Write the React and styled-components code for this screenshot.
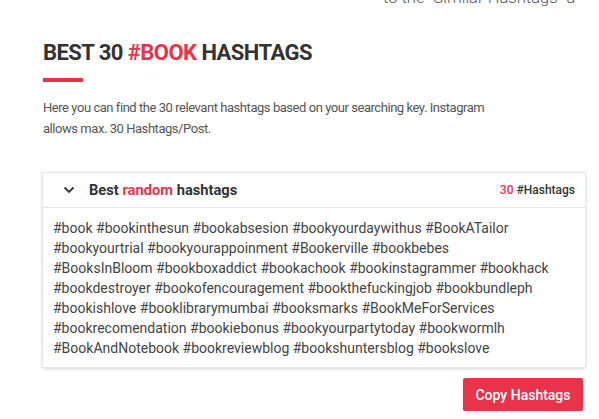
import React from 'react'
import styled, { createGlobalStyle } from 'styled-components'

const tags = [
    '#book #bookinthesun #bookabsesion #bookyourdaywithus #BookATailor',
    '#bookyourtrial #bookyourappoinment #Bookerville #bookbebes',
    '#BooksInBloom #bookboxaddict #bookachook #bookinstagrammer #bookhack',
    '#bookdestroyer #bookofencouragement #bookthefuckingjob #bookbundleph',
    '#bookishlove #booklibrarymumbai #booksmarks #BookMeForServices',
    '#bookrecomendation #bookiebonus #bookyourpartytoday #bookwormlh',
    '#BookAndNotebook #bookreviewblog #bookshuntersblog #bookslove',
]

const Global = createGlobalStyle`
body{
    margin: 0;
    background: #fff;
    font-family: Roboto, "Liberation Sans", sans-serif;
    overflow: hidden;
}
`

const App = () => {
    return (
        <Page>
            <Global />
            <TopLine>to the "Similar Hashtags" a</TopLine>
            <Title>BEST 30 <Red>#BOOK</Red> HASHTAGS</Title>
            <Bar />
            <Intro>
                Here you can find the 30 relevant hashtags based on your searching key. Instagram allows max. 30 Hashtags/Post.
            </Intro>
            <Card>
                <Head>
                    <Chevron viewBox="0 0 12 8" width="12" height="8">
                        <path d="M1.5 1.5 L6 6 L10.5 1.5" fill="none" stroke="#333" strokeWidth="1.8" />
                    </Chevron>
                    <HeadTitle>Best <Red>random</Red> hashtags</HeadTitle>
                    <Count><Red>30</Red> #Hashtags</Count>
                </Head>
                <Body>
                    {tags.map((line) => (
                        <div key={line}>{line}</div>
                    ))}
                </Body>
            </Card>
            <Actions>
                <CopyButton>Copy Hashtags</CopyButton>
            </Actions>
        </Page>
    )
}

const Page = styled.div`
padding: 0 15px 0 42px;
color: #333;
`
const TopLine = styled.div`
margin-top: -11px;
padding-left: 341px;
font-size: 16.6px;
line-height: 18px;
font-weight: 300;
color: #555;
white-space: nowrap;
overflow: hidden;
`
const Title = styled.h1`
margin: 32px 0 0 1px;
font-size: 22px;
line-height: 28px;
font-weight: 700;
color: #333;
letter-spacing: -0.55px;
`
const Red = styled.span`
color: #e8334a;
`
const Bar = styled.div`
width: 40px;
height: 4px;
margin: 11px 0 0 1px;
background: #e8334a;
`
const Intro = styled.p`
margin: 15px 0 0 1px;
max-width: 470px;
font-size: 13px;
line-height: 21px;
letter-spacing: -0.45px;
color: #555;
`
const Card = styled.div`
margin-top: 33px;
width: 542px;
border: 1px solid #e6e6e6;
box-shadow: 0 1px 3px rgba(0, 0, 0, 0.15);
background: #fff;
`
const Head = styled.div`
height: 34px;
display: flex;
align-items: center;
padding: 0 10px 0 20px;
border-bottom: 1px solid #e6e6e6;
`
const Chevron = styled.svg`
margin-right: 14px;
`
const HeadTitle = styled.div`
flex: 1;
font-size: 14.7px;
font-weight: 700;
color: #333;
`
const Count = styled.div`
font-size: 12px;
font-weight: 500;
color: #333;
`
const Body = styled.div`
padding: 10px 12px 9px 10px;
font-size: 14px;
line-height: 20px;
color: #444;
`
const Actions = styled.div`
display: flex;
justify-content: flex-end;
width: 542px;
margin-top: 10px;
`
const CopyButton = styled.button`
width: 120px;
height: 33px;
margin-right: 1px;
border: none;
border-radius: 2px;
background: #e8334a;
color: #fff;
font-family: Roboto, "Liberation Sans", sans-serif;
font-size: 14px;
font-weight: 500;
box-shadow: 0 1px 2px rgba(0, 0, 0, 0.2);
`

export default App
